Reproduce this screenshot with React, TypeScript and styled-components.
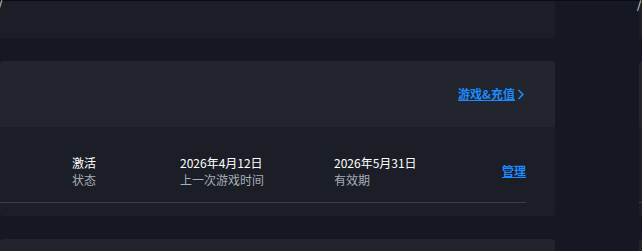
import React from "react";
import styled, { createGlobalStyle } from "styled-components";

const Global = createGlobalStyle`
  html, body { margin: 0; padding: 0; }
  body {
    background: #151822;
    overflow: hidden;
    width: 642px;
    height: 251px;
    font-family: "Noto Sans CJK SC", "Noto Sans", sans-serif;
    -webkit-font-smoothing: antialiased;
  }
`;

const Page = styled.div`
  display: flex;
  align-items: flex-start;
  gap: 84px;
  border-top: 1px solid #0b0c0f;
  width: 1200px;
`;

const Column = styled.div`
  width: 555px;
  flex: none;
  display: flex;
  flex-direction: column;
  & > * { flex: none; }
`;

const TopPanel = styled.div`
  height: 37px;
  background: #1b1e26;
  border-radius: 0 0 4px 0;
  position: relative;
`;

const Crumb = styled.span`
  position: absolute;
  left: -2px;
  top: -4px;
  font-size: 11px;
  line-height: 14px;
  color: #e8ecf2;
`;

const Card = styled.div`
  margin-top: 23px;
  border-radius: 4px;
  overflow: hidden;
  background: #1b1e26;
`;

const CardHeader = styled.div`
  height: 66px;
  background: #22252d;
  display: flex;
  align-items: center;
  justify-content: flex-end;
  padding-right: 31px;
`;

const BlueLink = styled.a`
  color: #1a8cff;
  font-size: 12px;
  font-weight: 700;
  line-height: 16px;
  text-decoration: underline;
  text-underline-offset: 1px;
  display: inline-flex;
  align-items: center;
  cursor: pointer;
`;

const Chevron = styled.svg`
  margin-left: 2px;
  width: 7px;
  height: 11px;
`;

const CardBody = styled.div`
  padding: 0 29px 0 0;
  height: 89px;
`;

const Row = styled.div`
  display: flex;
  align-items: center;
  height: 63px;
  padding-top: 12px;
  border-bottom: 1px solid #3a3d43;
`;

const Stat = styled.div<{ $w: number }>`
  width: ${(p) => p.$w}px;
  flex: none;
  display: flex;
  flex-direction: column;
`;

const StatValue = styled.span`
  color: #ffffff;
  font-size: 12px;
  font-weight: 400;
  line-height: 17px;
  white-space: nowrap;
`;

const StatLabel = styled.span`
  color: #a7aeb8;
  font-size: 12px;
  line-height: 17px;
  white-space: nowrap;
`;

const Spacer = styled.div`
  width: 72px;
  flex: none;
`;

const Manage = styled(BlueLink)`
  margin-left: auto;
  margin-top: 1px;
`;

const NextCard = styled.div`
  margin-top: 23px;
  height: 40px;
  border-radius: 4px 4px 0 0;
  background: #21242c;
`;

function AccountColumn() {
  return (
    <Column>
      <TopPanel>
        <Crumb>/</Crumb>
      </TopPanel>
      <Card>
        <CardHeader>
          <BlueLink>
            游戏&amp;充值
            <Chevron viewBox="0 0 7 11">
              <path d="M1.5 1 L5.8 5.5 L1.5 10" fill="none" stroke="#1a8cff" strokeWidth="1.6" />
            </Chevron>
          </BlueLink>
        </CardHeader>
        <CardBody>
          <Row>
            <Spacer />
            <Stat $w={108}>
              <StatValue>激活</StatValue>
              <StatLabel>状态</StatLabel>
            </Stat>
            <Stat $w={154}>
              <StatValue>2026年4月12日</StatValue>
              <StatLabel>上一次游戏时间</StatLabel>
            </Stat>
            <Stat $w={120}>
              <StatValue>2026年5月31日</StatValue>
              <StatLabel>有效期</StatLabel>
            </Stat>
            <Manage>管理</Manage>
          </Row>
        </CardBody>
      </Card>
      <NextCard />
    </Column>
  );
}

export default function App() {
  return (
    <>
      <Global />
      <Page>
        <AccountColumn />
        <AccountColumn />
      </Page>
    </>
  );
}
